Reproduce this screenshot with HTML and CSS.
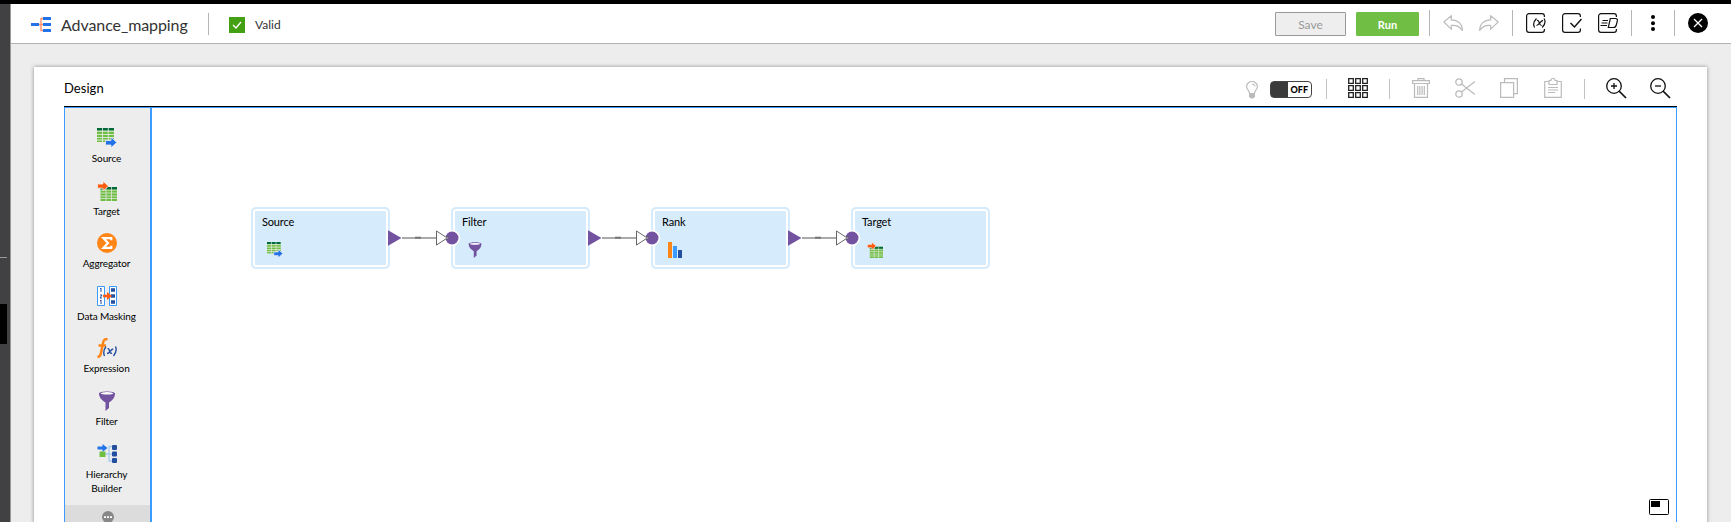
FILE: index.html
```html
<!DOCTYPE html>
<html lang="en">
<head>
<meta charset="utf-8">
<title>Advance_mapping</title>
<link rel="stylesheet" href="styles.css">
</head>
<body>
<svg class="defs" aria-hidden="true">
  <symbol id="source" viewBox="0 0 20 20">
    <path fill="#8cc864" d="M0 0h17v14H0z"/>
    <path fill="#00693c" d="M0 0h17v2.500H0z"/>
    <path fill="#6fbe44" d="M0 4h17v2H0zM0 7h17v2H0zM0 10h17v1.500H0zM0 12.500h17v1.500H0z"/>
    <path stroke="#eee" stroke-width=".8" d="M0 3.200h17M0 6.500h17M0 9.500h17M0 12h17M5.500 0v14M11.300 0v14"/>
    <path fill="#2272e8" stroke="#eee" stroke-width=".8" d="M8.500 12.500h5.500V9l5.800 5.500-5.800 5.300V17H8.500z"/>
  </symbol>
  <symbol id="target" viewBox="0 0 20 20">
    <path fill="#6fbe44" d="M3.500 6H20v14H3.500z"/>
    <path fill="#00693c" d="M3.500 6H20v2.500H3.500z"/>
    <path stroke="#eee" stroke-width=".7" d="M3.500 9.200H20M3.500 12H20M3.500 15H20M3.500 17.500H20M9 6v14M14.500 6v14"/>
    <path fill="#ff5a0f" stroke="#eee" stroke-width=".8" d="M.5 3H6V.2l5.500 4.900L6 10V7.200H.5z"/>
  </symbol>
  <symbol id="filter" viewBox="0 0 20 20">
    <path fill="#7352a0" d="M2 2.500C2-.3 18-.3 18 2.500c0 4-2.500 7-6 9V17l-3.500 3v-8.500C5 9.500 2 6.500 2 2.500z"/>
    <ellipse cx="10" cy="2.300" rx="6.300" ry="1.200" fill="#fff"/>
  </symbol>
  <symbol id="rank" viewBox="0 0 16 16">
    <path fill="#ff8516" d="M1 0h4v16H1z"/><path fill="#3b9cff" d="M6 4h4v12H6z"/><path fill="#234fa0" d="M11 8h4v8h-4z"/>
  </symbol>
</svg>
<div class="topbar"></div>
<div class="shell">
  <nav class="rail"><div class="rail-line"></div><div class="rail-active"></div></nav>
  <div class="main">
    <header class="header">
      <svg class="map-icon" width="20" height="16" viewBox="0 0 20 16"><path fill="none" stroke="#ff8a65" stroke-width="1.300" d="M8 7.500h4M12 1.500h-2v12h2"/><path fill="#2272e8" d="M0 6h8v3H0zM12 0h8v3h-8zM12 6h8v3h-8zM12 12h8v3h-8z"/></svg>
      <h1 class="title">Advance_mapping</h1>
      <i class="sep title-sep"></i>
      <svg class="valid-icon" width="16" height="16"><path fill="#43a013" d="M0 0h16v16H0z"/><path fill="none" stroke="#fff" stroke-width="1.400" d="M4 8l3 3 5-6"/></svg>
      <span class="valid">Valid</span>
      <button class="btn save">Save</button>
      <button class="btn run">Run</button>
      <i class="sep"></i>
      <svg class="undo" width="20" height="16" fill="none" stroke="#bbb" stroke-width="1.200"><path d="M.8 7L8.300.8v4c6.500 0 11 4 11 10.600-2.500-4-6-5.400-11-5v3.700z"/></svg>
      <svg class="redo" width="20" height="16" fill="none" stroke="#bbb" stroke-width="1.200"><path d="M19.200 7L11.700.8v4c-6.500 0-11 4-11 10.600 2.500-4 6-5.400 11-5v3.700z"/></svg>
      <i class="sep sep-a"></i>
      <svg class="tool" width="20" height="20" fill="none" stroke="#111" stroke-width="1.200"><path d="M18.400 4V3A2.400 2.400 0 0 0 16 .6H3A2.400 2.400 0 0 0 .6 3v14A2.400 2.400 0 0 0 3 19.400h13a2.400 2.400 0 0 0 2.400-2.400v-1"/><path d="M10.500 5.500Q6 10 8.600 14.500M18 5.500q2.700 4.500-1.800 9M11 7.500q1.500-.5 2.300 2.300t2.500 2.700M17 7.300c-2.500.5-4 5-6.500 5.200"/></svg>
      <svg class="tool" width="20" height="20" fill="none" stroke="#111" stroke-width="1.200"><path d="M18.400 4V3A2.400 2.400 0 0 0 16 .6H3A2.400 2.400 0 0 0 .6 3v14A2.400 2.400 0 0 0 3 19.400h13a2.400 2.400 0 0 0 2.400-2.400v-1.500"/><path stroke-width="1.500" d="M8.500 10l4 4L19.500 6"/></svg>
      <svg class="tool" width="20" height="20" fill="none" stroke="#111" stroke-width="1.200"><path d="M18.400 4V3A2.400 2.400 0 0 0 16 .6H3A2.400 2.400 0 0 0 .6 3v14A2.400 2.400 0 0 0 3 19.400h13a2.400 2.400 0 0 0 2.400-2.400v-1"/><path d="M12.300 5.500h5.200q2.400 0 1.800 2.300l-1 4.200q-.6 2.500-3 2.500h-5zM4.500 7.500H10M3.500 10h6M2.500 12.500H9"/></svg>
      <i class="sep sep-b"></i>
      <svg class="dots" width="4" height="16"><circle cx="2" cy="2" r="2"/><circle cx="2" cy="8.200" r="2"/><circle cx="2" cy="14" r="2"/></svg>
      <i class="sep sep-c"></i>
      <svg class="close" width="20" height="20"><circle cx="10" cy="10" r="10"/><path stroke="#fff" stroke-width="1.300" d="M6 6l8 8M14 6l-8 8"/></svg>
    </header>
    <section class="card">
      <div class="card-head">
        <h2 class="design">Design</h2>
        <svg class="bulb" width="12" height="18" viewBox="0 0 12 18"><path fill="none" stroke="#bbb" stroke-width="1.200" d="M3.500 12.500c0-3-2.900-4-2.900-7a5.400 5 0 0 1 10.800 0c0 3-2.900 4-2.900 7zM6 3q2.500 0 3 2.500"/><path fill="#bbb" d="M3 12.500h6V16l-2 1.500H5L3 16z"/></svg>
        <div class="toggle"><span>OFF</span></div>
        <i class="sep tb1"></i>
        <svg class="grid-icon" width="20" height="20" fill="none" stroke="#222" stroke-width="1.300"><path d="M.7.700h4.600v4.600H.7zM7.700.700h4.600v4.600H7.700zM14.700.700h4.600v4.600h-4.600zM.7 7.700h4.600v4.600H.7zM7.700 7.700h4.600v4.600H7.700zM14.700 7.700h4.600v4.600h-4.600zM.7 14.700h4.600v4.600H.7zM7.700 14.700h4.600v4.600H7.700zM14.700 14.700h4.600v4.600h-4.600z"/></svg>
        <i class="sep tb2"></i>
        <svg class="trash" width="18" height="20" fill="none" stroke="#bbb" stroke-width="1.200"><path d="M.6 2.700h16.800v2.800H.6zM6 2.500V.6h6v1.900M2.500 5.500v13.900h13V5.500M5.700 8v9M7.900 8v9M10.100 8v9M12.300 8v9"/></svg>
        <svg class="cut" width="20" height="20" fill="none" stroke="#bbb" stroke-width="1.300"><circle cx="4" cy="4" r="3.200"/><circle cx="4" cy="16" r="3.200"/><path d="M6.500 6L20 16.500M6.500 14L20 3.500"/></svg>
        <svg class="copy" width="18" height="20" fill="none" stroke="#bbb" stroke-width="1.200"><path d="M.6 4.600h13v14.800H.6zM4.500 4V.6h12.900v15H14"/></svg>
        <svg class="paste" width="18" height="20" fill="none" stroke="#bbb" stroke-width="1.200"><path d="M5 3.500H.7v15.900h16.600V3.500H13M5 2.500h2q0-2 2-2t2 2h2v4H5zM4 9.500h10M4 12h10M4 14.500h7"/></svg>
        <i class="sep tb3"></i>
        <svg class="zoom-in" width="21" height="21" fill="none" stroke="#111" stroke-width="1.300"><circle cx="8" cy="8" r="7.300"/><path stroke-width="1.700" d="M13 13l7 7"/><path d="M5 8h6M8 5v6"/></svg>
        <svg class="zoom-out" width="21" height="21" fill="none" stroke="#111" stroke-width="1.300"><circle cx="8" cy="8" r="7.300"/><path stroke-width="1.700" d="M13 13l7 7"/><path d="M5 8h6"/></svg>
      </div>
      <div class="workspace">
        <aside class="palette">
          <div class="item"><svg class="pi"><use href="#source"/></svg><span>Source</span></div>
          <div class="item"><svg class="pi"><use href="#target"/></svg><span>Target</span></div>
          <div class="item"><svg class="pi" viewBox="0 0 20 20"><circle cx="10" cy="10" r="10" fill="#ff8516"/><path fill="none" stroke="#fff" stroke-width="2.200" d="M14.300 7.300V5.200H6.500l4.500 4.800-4.500 4.800h7.800v-2.100"/></svg><span>Aggregator</span></div>
          <div class="item"><svg class="pi" viewBox="0 0 20 20"><path fill="#fff" stroke="#3b9cff" d="M.5.500h7v19h-7zM12.500.500h7v19h-7z"/><path fill="none" stroke="#234fa0" stroke-width="1" d="M3 3l1-1v4M3 9h2l-2 3h2M3 15l1-1v4"/><path fill="#234fa0" d="M14 2.200h4v3.600h-4zM14 8.200h4v3.600h-4zM14 14.200h4v3.600h-4z"/><path fill="#ff5a0f" d="M6 8.700h4V6l5 4-5 4v-2.700H6z"/></svg><span>Data Masking</span></div>
          <div class="item"><svg class="pi" viewBox="0 0 20 20"><path fill="none" stroke="#ff8516" stroke-width="2.500" d="M10.500 1.500Q7 0 6 5L4 15q-.7 4-3.500 3.600M1.500 7.500h7.500"/><path fill="none" stroke="#234fa0" stroke-width="1.400" d="M9 8.500q-3.500 4.500-1.500 9.500M18.500 8.500q2 4.500-2 9.500M10.500 11q1.500-1 2 2t2.500 2M16.200 11c-2 0-4 4.500-6.200 4.500"/></svg><span>Expression</span></div>
          <div class="item"><svg class="pi"><use href="#filter"/></svg><span>Filter</span></div>
          <div class="item"><svg class="pi" viewBox="0 0 20 20"><path fill="none" stroke="#a6cdf0" stroke-width="1.300" d="M8 10h7M16 2.500h-4v14.500h4"/><path fill="#2272e8" d="M.5 2.500h5V0l5 4-5 4V5.500h-5z"/><path fill="#6fbe44" d="M2.500 7.500h6V13h-6z"/><rect x="15" y="1" width="5" height="5" rx="1" fill="#234fa0"/><rect x="15" y="7.500" width="5" height="5" rx="1" fill="#234fa0"/><rect x="15" y="14" width="5" height="5" rx="1" fill="#234fa0"/></svg><span>Hierarchy<br>Builder</span></div>
          <div class="more"><svg width="12" height="12"><circle cx="6" cy="6" r="6" fill="#888"/><path fill="#fff" d="M2 5.200h2v1.700H2zM5 5.200h2v1.700H5zM8 5.200h2v1.700H8z"/></svg></div>
        </aside>
        <div class="canvas">
          <div class="node n1"><b>Source</b><svg class="ni"><use href="#source"/></svg></div>
          <div class="node n2"><b>Filter</b><svg class="ni"><use href="#filter"/></svg></div>
          <div class="node n3"><b>Rank</b><svg class="ni"><use href="#rank"/></svg></div>
          <div class="node n4"><b>Target</b><svg class="ni"><use href="#target"/></svg></div>
          <svg class="link l1" viewBox="0 0 76 20"><use href="#link"/></svg>
          <svg class="link l2" viewBox="0 0 76 20"><use href="#link"/></svg>
          <svg class="link l3" viewBox="0 0 76 20"><g id="link"><path stroke="#aaa" stroke-width="2" d="M16 10h34"/><path stroke="#777" stroke-width="2" d="M29 9.700h6"/><path fill="#7352a0" d="M2 2.200L15.500 10 2 17.800z"/><circle cx="66" cy="10" r="8" fill="#fff"/><circle cx="66" cy="10" r="6.500" fill="#7352a0"/><path fill="#fff" stroke="#666" d="M50.500 3v14L60 10.800h2.500V9.200H60z"/></g></svg>
          <svg class="mini" width="20" height="16"><rect x=".5" y=".5" width="19" height="15" rx="1" fill="#fff" stroke="#000"/><path d="M2 2h9v6H2z"/></svg>
        </div>
      </div>
    </section>
  </div>
</div>
</body>
</html>
```

FILE: styles.css
```css
* { box-sizing: border-box; }
body { margin: 0; height: 522px; overflow: hidden; background: #ededed; color: #000; font-family: Lato, "Open Sans", sans-serif; }
svg { display: block; flex: none; }
h1, h2 { margin: 0; font-weight: 400; }
.defs { position: absolute; width: 0; height: 0; }
.topbar { height: 4px; background: #000; }
.shell { display: flex; height: 518px; }
.rail { width: 11px; flex: none; background: #414042; border-right: 1px solid #999; padding-top: 253px; }
.rail-line { width: 7px; height: 1px; background: #999; }
.rail-active { width: 7px; height: 40px; margin-top: 46px; background: #000; }
.main { flex: 1; min-width: 0; }
.header { display: flex; align-items: flex-start; height: 40px; padding-left: 20px; background: #fff; border-bottom: 1px solid #b3b3b3; }
.sep { flex: none; width: 1px; height: 26px; margin-top: 6px; background: #b5b5b5; }
.map-icon { margin-top: 13px; }
.title { width: 147px; margin-left: 10px; padding-top: 10px; font-size: 16px; line-height: 22px; letter-spacing: -.09px; color: #333; white-space: nowrap; }
.title-sep { height: 22px; margin-top: 9px; }
.valid-icon { margin: 13px 0 0 20px; }
.valid { flex: 1; padding-left: 10px; margin-top: 12px; font-size: 12px; line-height: 18px; color: #333; }
.btn { width: 71px; height: 24px; margin-top: 8px; padding: 1px 0 0; border: 1px solid #999; border-radius: 1px; background: #eee; color: #999; font: 12px Lato, sans-serif; }
.run { width: 63px; margin: 8px 10px 0; border-color: #70bf44; background: #70bf44; color: #fff; font-weight: 700; font-size: 11px; }
.undo { margin: 11px 0 0 13px; }
.redo { margin: 11px 0 0 16px; }
.sep-a { margin-left: 13px; }
.tool { margin: 9px 0 0 16px; }
.sep-a + .tool { margin-left: 13px; }
.sep-b { margin-left: 13px; }
.dots { margin: 11px 0 0 19px; }
.sep-c { margin-left: 19px; }
.close { margin: 9px 23px 0 13px; }
.card { width: 1673px; height: 470px; margin: 23px 0 0 23px; padding: 0 30px; background: #fff; box-shadow: 0 0 4px rgba(0,0,0,.4); }
.card-head { display: flex; height: 40px; border-bottom: 1px solid #000; }
.design { flex: 1; padding-top: 11px; font-size: 13px; line-height: 20px; letter-spacing: .05px; }
.card-head svg { margin-top: 11px; }
.card-head .sep { height: 20px; margin-top: 12px; background: #c2c2c2; }
.card-head .bulb { margin-top: 14px; }
.toggle { display: flex; justify-content: flex-end; width: 42px; height: 17px; margin: 14px 14px 0 12px; border: 1px solid #444; border-radius: 4px; background: linear-gradient(90deg, #3a3a3a 17px, #fff 17px); }
.toggle span { padding-right: 3px; font-size: 9px; line-height: 16px; font-weight: 900; }
.grid-icon { margin-left: 21px; }
.tb2 { margin-left: 21px; }
.trash { margin-left: 22px; }
.cut { margin-left: 25px; margin-right: 25px; }
.paste { margin-left: 26px; }
.tb3 { margin-left: 22px; }
.zoom-in { margin-left: 21px; }
.zoom-out { margin-left: 23px; margin-right: 6px; }
.workspace { display: flex; width: 1613px; height: 420px; border: 1px solid #3b9cff; border-bottom: 0; }
.palette { width: 87px; flex: none; padding-top: 20px; background: #ededed; border-right: 2px solid #3b9cff; }
.item { display: flex; flex-direction: column; align-items: center; height: 52.600px; padding-right: 2px; font-size: 10px; line-height: 14px; letter-spacing: -.12px; text-align: center; white-space: nowrap; }
.item:nth-child(7) { height: 61.400px; }
.pi { width: 20px; height: 20px; margin-bottom: 3px; }
.more { display: flex; justify-content: center; height: 40px; padding-top: 6px; background: #dcdcdc; }
.canvas { position: relative; flex: 1; }
.node { position: absolute; top: 99px; width: 139px; height: 62px; padding: 6px 9px; border: 2px solid #d6ebfc; border-radius: 5px; background: #d6ebfc; box-shadow: inset 0 0 0 2px #fff; }
.n1 { left: 99px; } .n2 { left: 299px; } .n3 { left: 499px; } .n4 { left: 699px; }
.node b { display: block; font-size: 11px; line-height: 14px; font-weight: 400; letter-spacing: -.15px; }
.ni { width: 16px; height: 16px; margin: 13px 0 0 5px; }
.link { position: absolute; top: 120px; width: 76px; height: 20px; }
.l1 { left: 234px; } .l2 { left: 434px; } .l3 { left: 634px; }
.mini { position: absolute; left: 1497px; top: 391px; }
```
